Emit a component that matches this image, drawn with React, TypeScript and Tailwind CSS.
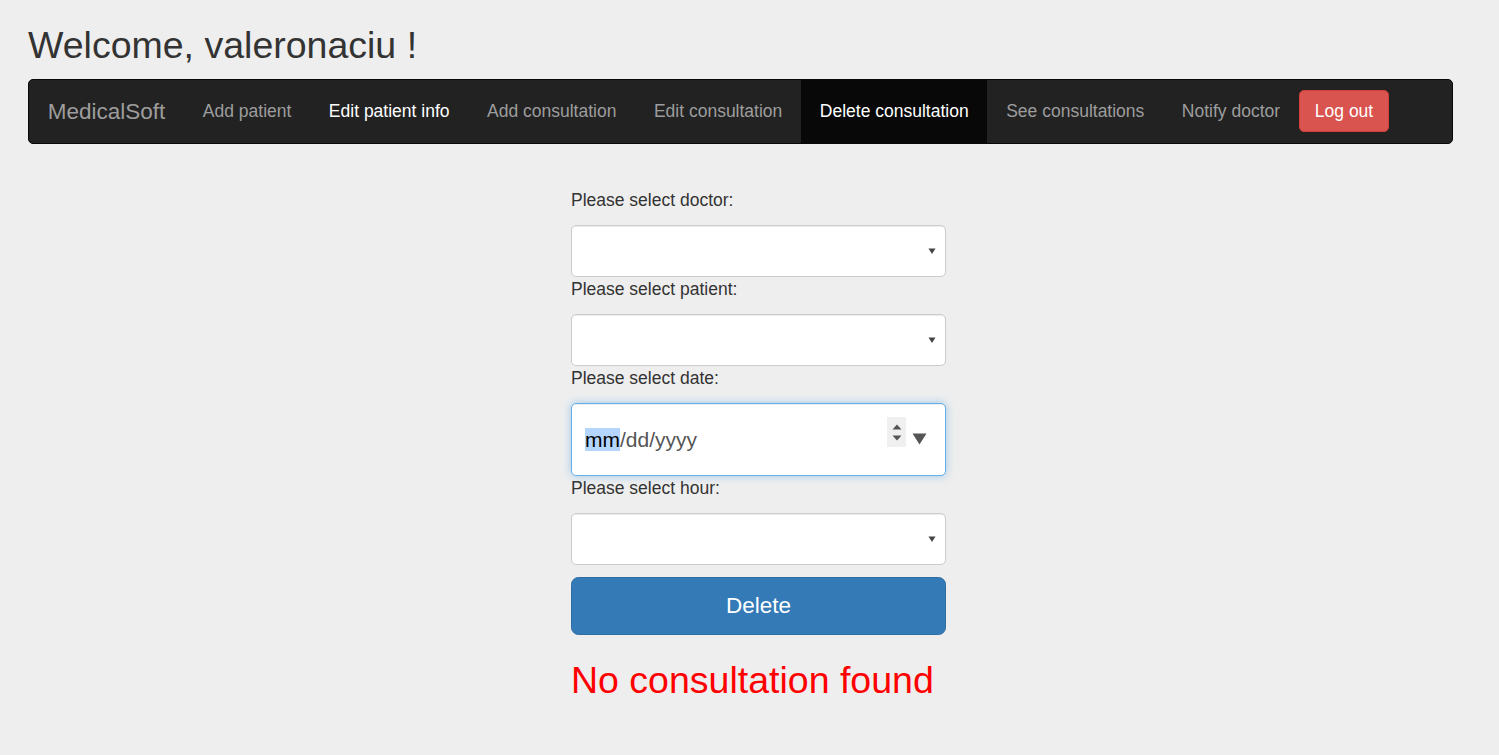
import React from "react";

const Caret = () => (
  <svg width="8" height="7" viewBox="0 0 8 7" className="absolute right-[9px] top-1/2 -translate-y-1/2">
    <path d="M0.5 1 L7.5 1 L4 6.5 Z" fill="#444" />
  </svg>
);

const FakeSelect = () => (
  <div className="relative h-[52px] w-full rounded-[5px] border border-[#ccc] bg-white shadow-[inset_0_1px_1px_rgba(0,0,0,0.075)]">
    <Caret />
  </div>
);

const Label = ({ children }: { children: React.ReactNode }) => (
  <div className="mb-[12px] h-[25px] leading-[25px] text-[17.5px] text-[#333]">{children}</div>
);

export default function App() {
  const links = [
    { t: "Add patient", c: "text-[#9d9d9d]" },
    { t: "Edit patient info", c: "text-white" },
    { t: "Add consultation", c: "text-[#9d9d9d]" },
    { t: "Edit consultation", c: "text-[#9d9d9d]" },
    { t: "Delete consultation", c: "text-white bg-[#080808]" },
    { t: "See consultations", c: "text-[#9d9d9d]" },
    { t: "Notify doctor", c: "text-[#9d9d9d]" },
  ];
  return (
    <div
      className="min-h-[755px] w-full bg-[#eeeeee] pl-[28px]"
      style={{ fontFamily: '"Liberation Sans", Arial, Helvetica, sans-serif' }}
    >
      <div className="pt-[25px]">
        <h2 className="h-[41px] text-[37.5px] leading-[41px] text-[#333]">Welcome, valeronaciu !</h2>
      </div>
      <nav className="mt-[13px] flex h-[65px] w-[1425px] items-start rounded-[5px] border border-[#080808] bg-[#222222]">
        <div className="h-[63px] px-[18.75px] text-[22.5px] leading-[63px] text-[#9d9d9d]">MedicalSoft</div>
        {links.map((l) => (
          <div key={l.t} className={`h-[63px] px-[18.75px] text-[17.5px] leading-[63px] ${l.c}`}>
            {l.t}
          </div>
        ))}
        <div className="mt-[10px] flex h-[42px] items-center rounded-[5px] border border-[#d43f3a] bg-[#d9534f] px-[15px] text-[17.5px] text-white">
          Log out
        </div>
      </nav>

      <div className="ml-[543px] mt-[44px] w-[375px]">
        <Label>Please select doctor:</Label>
        <FakeSelect />
        <Label>Please select patient:</Label>
        <FakeSelect />
        <Label>Please select date:</Label>
        <div className="relative flex h-[73px] w-full items-center rounded-[5px] border border-[#66afe9] bg-white pl-[13px] shadow-[inset_0_1px_1px_rgba(0,0,0,0.075),0_0_8px_rgba(102,175,233,0.6)]">
          <span className="text-[21px] text-[#555]">
            <span className="bg-[#b4d5fe] text-black">mm</span>/dd/yyyy
          </span>
          <div className="absolute left-[315px] top-[13px] flex h-[30px] w-[19px] flex-col items-center justify-center gap-[5px] bg-[#f0f0f0]">
            <svg width="10" height="6" viewBox="0 0 10 6"><path d="M0.5 5.5 L5 0.5 L9.5 5.5 Z" fill="#555" /></svg>
            <svg width="10" height="6" viewBox="0 0 10 6"><path d="M0.5 0.5 L5 5.5 L9.5 0.5 Z" fill="#555" /></svg>
          </div>
          <svg width="15" height="12" viewBox="0 0 15 12" className="absolute left-[340px] top-[29px]">
            <path d="M0.5 0.5 L14.5 0.5 L7.5 11.5 Z" fill="#555" />
          </svg>
        </div>
        <Label>Please select hour:</Label>
        <FakeSelect />
        <div className="mt-[12px] flex h-[58px] w-full items-center justify-center rounded-[7.5px] border border-[#2e6da4] bg-[#337ab7] text-[22.5px] text-white">
          Delete
        </div>
        <h2 className="mt-[25px] text-[37.5px] leading-[41px] text-[#ff0000]">No consultation found</h2>
      </div>
    </div>
  );
}
